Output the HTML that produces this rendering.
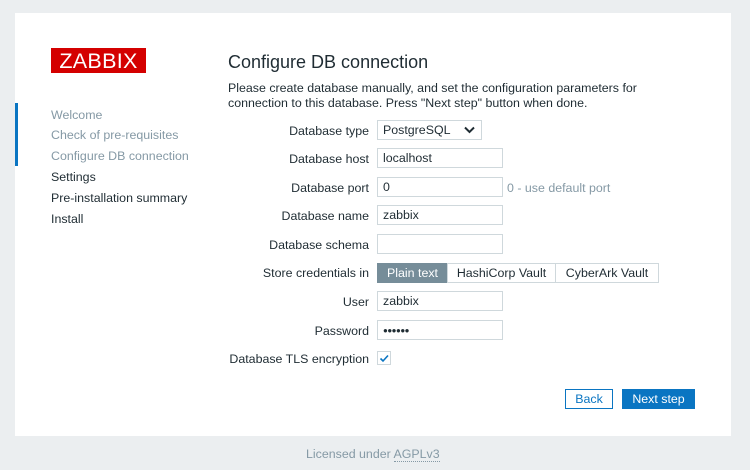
<!DOCTYPE html>
<html><head><style>
body{margin:0;width:750px;height:470px;background:#ebeef0;font-family:"Liberation Sans",Arial,sans-serif;font-size:12.4px;color:#1f2c33;position:relative;overflow:hidden}
.panel{position:absolute;left:15px;top:13px;width:716px;height:423px;background:#fff}
.bar{position:absolute;left:15px;top:103px;width:3px;height:63px;background:#0a75c2}
.logo{position:absolute;left:51px;top:48px;width:95px;height:25px;background:#d40000;color:#fff;font-size:21.5px;line-height:26px;text-align:center;letter-spacing:0.3px}
.nav{position:absolute;left:51px;margin-top:1px}
.g{color:#8599a5}
h1{position:absolute;left:228px;top:52px;margin:0;font-weight:normal;font-size:18px}
.p{position:absolute;left:228px;top:81px;line-height:15px;width:430px}
.lbl{position:absolute;right:381px;text-align:right;white-space:nowrap;margin-top:1px}
.in{position:absolute;left:377px;line-height:19px;padding-left:5px;box-sizing:border-box;width:126px;height:20px;border:1px solid #cfd8dc}
.seg{position:absolute;top:263px;height:20px;box-sizing:border-box;border:1px solid #cfd8dc;line-height:19px;text-align:center}
.btn{position:absolute;top:389px;height:20px;box-sizing:border-box;line-height:19px;text-align:center}
</style></head><body>
<div class="panel"></div>
<div class="bar"></div>
<div class="logo">ZABBIX</div>
<div class="nav g" style="top:107px">Welcome</div>
<div class="nav g" style="top:127px">Check of pre-requisites</div>
<div class="nav g" style="top:148px">Configure DB connection</div>
<div class="nav" style="top:169px">Settings</div>
<div class="nav" style="top:190px">Pre-installation summary</div>
<div class="nav" style="top:211px">Install</div>
<h1>Configure DB connection</h1>
<div class="p">Please create database manually, and set the configuration parameters for connection to this database. Press "Next step" button when done.</div>

<div class="lbl" style="top:123px">Database type</div>
<div class="in" style="top:120px;width:105px">PostgreSQL<svg style="position:absolute;right:6px;top:5px" width="11" height="8"><path d="M1 1.5L5.5 6L10 1.5" stroke="#1f2c33" stroke-width="2" fill="none"/></svg></div>
<div class="lbl" style="top:151px">Database host</div>
<div class="in" style="top:148px">localhost</div>
<div class="lbl" style="top:180px">Database port</div>
<div class="in" style="top:177px">0</div>
<div style="position:absolute;left:507px;top:181px;color:#8599a5">0 - use default port</div>
<div class="lbl" style="top:208px">Database name</div>
<div class="in" style="top:205px">zabbix</div>
<div class="lbl" style="top:237px">Database schema</div>
<div class="in" style="top:234px"></div>
<div class="lbl" style="top:265px">Store credentials in</div>
<div class="seg" style="left:377px;width:71px;background:#768d99;color:#fff;border-color:#768d99">Plain text</div>
<div class="seg" style="left:447px;width:109px">HashiCorp Vault</div>
<div class="seg" style="left:555px;width:104px">CyberArk Vault</div>
<div class="lbl" style="top:294px">User</div>
<div class="in" style="top:291px">zabbix</div>
<div class="lbl" style="top:323px">Password</div>
<div class="in" style="top:320px;font-size:8px;letter-spacing:-0.5px">●●●●●●</div>
<div class="lbl" style="top:351px">Database TLS encryption</div>
<div style="position:absolute;left:377px;top:351px;width:14px;height:14px;box-sizing:border-box;border:1px solid #cfd8dc"><svg width="12" height="12" style="position:absolute;left:0;top:0"><path d="M2.5 6.5L5 9L10 3.5" stroke="#0a75c2" stroke-width="1.6" fill="none"/></svg></div>
<div class="btn" style="left:565px;width:48px;border:1px solid #0a75c2;color:#0a75c2">Back</div>
<div class="btn" style="left:622px;width:73px;background:#0a75c2;color:#fff;line-height:21px">Next step</div>
<div style="position:absolute;left:306px;top:447px;color:#8599a5">Licensed under <span style="border-bottom:1px dotted #8599a5">AGPLv3</span></div>
</body></html>
